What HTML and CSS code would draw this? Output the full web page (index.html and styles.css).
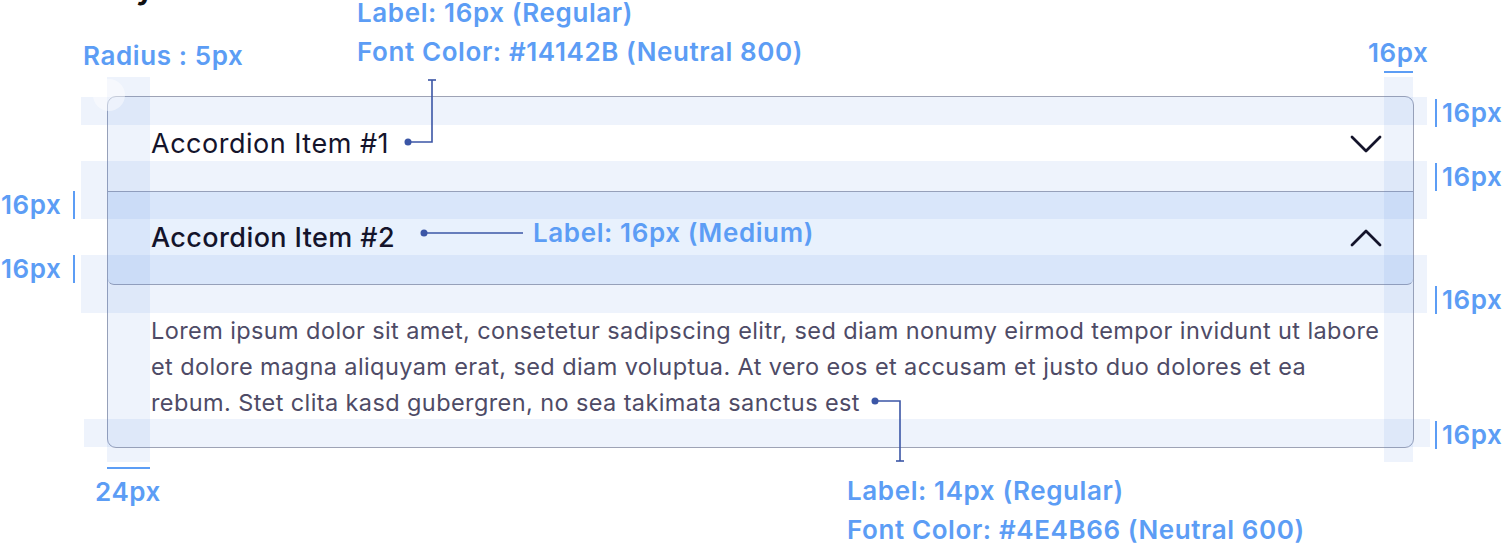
FILE: index.html
```html
<!DOCTYPE html>
<html>
<head>
<meta charset="utf-8">
<link rel="stylesheet" href="styles.css">
</head>
<body>
<div class="canvas">
  <span class="cut-title">y</span>

  <div class="accordion">
    <div class="item-head">
      <span class="head-label">Accordion Item #1</span>
      <svg class="chev" viewBox="0 0 32 20" width="32" height="20"><polyline points="2,3 16,17 30,3" fill="none" stroke="#14142B" stroke-width="2.8" stroke-linecap="round" stroke-linejoin="round"/></svg>
    </div>
    <div class="item-head open">
      <span class="head-label medium">Accordion Item #2</span>
      <svg class="chev" viewBox="0 0 32 20" width="32" height="20"><polyline points="2,17 16,3 30,17" fill="none" stroke="#14142B" stroke-width="2.8" stroke-linecap="round" stroke-linejoin="round"/></svg>
    </div>
    <div class="item-body">
      <p>Lorem ipsum dolor sit amet, consetetur sadipscing elitr, sed diam nonumy eirmod tempor invidunt ut labore<br>et dolore magna aliquyam erat, sed diam voluptua. At vero eos et accusam et justo duo dolores et ea<br>rebum. Stet clita kasd gubergren, no sea takimata sanctus est</p>
    </div>
  </div>

  <!-- spacing overlays -->
  <div class="band h b1"></div>
  <div class="band h b2"></div>
  <div class="band h b3"></div>
  <div class="band h b4"></div>
  <div class="band h b5"></div>
  <div class="band h b6"></div>
  <div class="band v vl"></div>
  <div class="band v vr"></div>
  <div class="radius-dot"></div>

  <!-- annotations -->
  <div class="note n-radius">Radius : 5px</div>
  <div class="note n-top">Label: 16px (Regular)<br>Font Color: #14142B (Neutral 800)</div>
  <div class="note n-med">Label: 16px (Medium)</div>
  <div class="note n-body">Label: 14px (Regular)<br>Font Color: #4E4B66 (Neutral 600)</div>
  <div class="note n-24">24px</div>
  <div class="uline u-24"></div>
  <div class="note n-16top">16px</div>
  <div class="uline u-16top"></div>

  <div class="note side r1"><span class="bar"></span>16px</div>
  <div class="note side r2"><span class="bar"></span>16px</div>
  <div class="note side r3"><span class="bar"></span>16px</div>
  <div class="note side r4"><span class="bar"></span>16px</div>
  <div class="note side l1">16px<span class="bar lbar"></span></div>
  <div class="note side l2">16px<span class="bar lbar"></span></div>

  <!-- callout lines -->
  <svg class="callouts" width="1504" height="554" viewBox="0 0 1504 554">
    <g stroke="#3B56A6" stroke-width="1.6" fill="none">
      <line x1="428" y1="80" x2="436" y2="80"/>
      <polyline points="432,80 432,142 408,142"/>
      <line x1="424" y1="233" x2="523" y2="233"/>
      <polyline points="875,401 900,401 900,461"/>
      <line x1="896" y1="461" x2="904" y2="461"/>
    </g>
    <g fill="#3B56A6">
      <circle cx="408" cy="142" r="3.5"/>
      <circle cx="424" cy="233" r="3.5"/>
      <circle cx="875" cy="401" r="3.5"/>
    </g>
  </svg>
</div>
</body>
</html>
```

FILE: styles.css
```css
* { box-sizing: border-box; }
html, body { margin: 0; padding: 0; background: #ffffff; }
body { font-family: Inter, "Noto Sans", sans-serif; }

.canvas {
  position: relative;
  width: 1504px;
  height: 554px;
  overflow: hidden;
  padding-top: 96px;
  padding-left: 107px;
}

.cut-title {
  position: absolute;
  left: 136px;
  top: -30px;
  font-size: 30px;
  font-weight: 700;
  color: #111;
}

.accordion {
  width: 1307px;
  border: 1.5px solid #9ea3b5;
  border-radius: 9px;
  overflow: hidden;
  background: #fff;
}

.item-head {
  display: flex;
  align-items: center;
  justify-content: space-between;
  height: 94px;
  padding: 0 30px 0 43px;
}
.item-head + .item-head { border-top: 1.5px solid #9ea3b5; }
.item-head.open {
  background: #e8f1fd;
  border-bottom: 1.5px solid #9ea3b5;
  border-radius: 0 0 6px 6px;
}

.head-label {
  font-size: 27px;
  line-height: 36px;
  color: #14142B;
  font-weight: 400;
  letter-spacing: 0.5px;
}
.head-label.medium { font-weight: 500; letter-spacing: 0.4px; }

.chev { display: block; margin-right: 1px; }

.item-body {
  padding: 28px 16px 26px 43px;
}
.item-body p {
  margin: 0;
  font-size: 23.5px;
  line-height: 36px;
  color: #4E4B66;
  letter-spacing: 0.4px;
  white-space: nowrap;
}

/* overlays */
.band {
  position: absolute;
  background: rgba(85, 135, 225, 0.1);
  pointer-events: none;
}
.band.h { left: 81px; width: 1346px; height: 29px; }
.b1 { top: 97px; height: 28px !important; }
.b2 { top: 161px; }
.b3 { top: 190px; }
.b4 { top: 255px; }
.b5 { top: 284px; }
.b6 { top: 419px; left: 84px !important; height: 28px !important; }
.band.v { top: 77px; height: 385px; }
.vl { left: 107px; width: 43px; }
.vr { left: 1384px; width: 29px; }

.radius-dot {
  position: absolute;
  left: 93px;
  top: 79px;
  width: 32px;
  height: 32px;
  border-radius: 50%;
  background: rgba(255, 255, 255, 0.45);
}

.note {
  position: absolute;
  color: #5C9DF5;
  font-weight: 600;
  font-size: 26px;
  line-height: 39px;
  white-space: nowrap;
  letter-spacing: 0.6px;
}
.n-radius { left: 83px; top: 36px; }
.n-top { left: 357px; top: -7px; }
.n-med { left: 533px; top: 213px; }
.n-body { left: 847px; top: 471px; }
.n-24 { left: 95px; top: 472px; }
.n-16top { left: 1368px; top: 33px; }

.uline { position: absolute; height: 2px; background: #5C9DF5; }
.u-24 { left: 107px; top: 467px; width: 43px; }
.u-16top { left: 1384px; top: 71px; width: 29px; }

.side { display: flex; align-items: center; gap: 5px; }
.side .bar { display: block; width: 2px; height: 28px; background: #5C9DF5; }
.side .lbar { margin-left: 6px; }
.r1 { left: 1435px; top: 93px; }
.r2 { left: 1435px; top: 157px; }
.r3 { left: 1435px; top: 280px; }
.r4 { left: 1435px; top: 415px; }
.l1 { left: 1px; top: 185px; }
.l2 { left: 1px; top: 249px; }

.callouts { position: absolute; left: 0; top: 0; pointer-events: none; }
```
